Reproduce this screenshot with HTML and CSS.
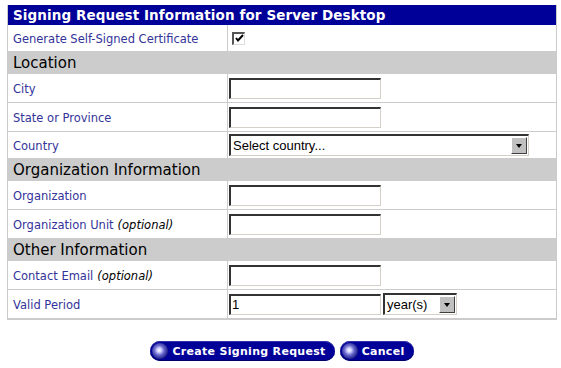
FILE: index.html
```html
<!DOCTYPE html>
<html lang="en">
<head>
  <meta charset="UTF-8">
  <title>Signing Request Information</title>
  <link rel="stylesheet" href="styles.css">
</head>
<body>
  <div class="panel">
    <div class="panel-title">Signing Request Information for Server Desktop</div>

    <div class="row row--check">
      <div class="label">Generate Self-Signed Certificate</div>
      <div class="field">
        <span class="check">
          <svg width="9" height="9" viewBox="0 0 9 9"><path d="M1 4 L3 6.5 L8 1" fill="none" stroke="#000" stroke-width="2"/></svg>
        </span>
      </div>
    </div>

    <div class="section">Location</div>
    <div class="row">
      <div class="label">City</div>
      <div class="field"><span class="text-input"></span></div>
    </div>
    <div class="row">
      <div class="label">State or Province</div>
      <div class="field"><span class="text-input"></span></div>
    </div>
    <div class="row row--select">
      <div class="label">Country</div>
      <div class="field">
        <div class="select select--wide">
          <span class="select-text">Select country...</span>
          <span class="select-arrow"></span>
        </div>
      </div>
    </div>

    <div class="section">Organization Information</div>
    <div class="row">
      <div class="label">Organization</div>
      <div class="field"><span class="text-input"></span></div>
    </div>
    <div class="row">
      <div class="label">Organization Unit <em>(optional)</em></div>
      <div class="field"><span class="text-input"></span></div>
    </div>

    <div class="section">Other Information</div>
    <div class="row">
      <div class="label">Contact Email <em>(optional)</em></div>
      <div class="field"><span class="text-input"></span></div>
    </div>
    <div class="row">
      <div class="label">Valid Period</div>
      <div class="field">
        <span class="text-input">1</span>
        <div class="select select--small">
          <span class="select-text">year(s)</span>
          <span class="select-arrow"></span>
        </div>
      </div>
    </div>
  </div>

  <div class="actions">
    <button class="btn"><span class="orb"></span>Create Signing Request</button>
    <button class="btn"><span class="orb"></span>Cancel</button>
  </div>
</body>
</html>
```

FILE: styles.css
```css
body {
  margin: 4px 0 0 7px;
  background: #fff;
  font-family: "DejaVu Sans", Verdana, sans-serif;
}

.panel {
  width: 550px;
  box-sizing: border-box;
  border: 1px solid #cccccc;
  border-top: none;
}

.panel-title {
  height: 20px;
  line-height: 20px;
  margin-top: 1px;
  padding-left: 5px;
  background: #000099;
  color: #fff;
  font-weight: bold;
  font-size: 13.5px;
  letter-spacing: 0.1px;
}

.row {
  display: grid;
  grid-template-columns: 220px 1fr;
  height: 28px;
  border-bottom: 1px solid #cccccc;
}

.row--check {
  height: 26px;
}

.row--select {
  height: 26px;
}

.label {
  display: flex;
  align-items: center;
  padding-left: 5px;
  padding-top: 1px;
  border-right: 1px solid #cccccc;
  color: #333399;
  font-size: 11.5px;
}

.label em {
  color: #000;
  margin-left: 4px;
  font-size: 11.5px;
}

.field {
  display: flex;
  align-items: center;
  gap: 2px;
  padding-left: 1px;
}

.section {
  height: 22px;
  line-height: 22px;
  padding-left: 5px;
  background: #cccccc;
  color: #000;
  font-size: 15px;
}

.check {
  display: flex;
  align-items: center;
  justify-content: center;
  width: 13px;
  height: 13px;
  box-sizing: border-box;
  margin-left: 3px;
  border-top: 2px solid #555;
  border-left: 2px solid #555;
  border-right: 1px solid #ddd;
  border-bottom: 1px solid #ddd;
  background: #fff;
}

.text-input {
  width: 152px;
  height: 21px;
  box-sizing: border-box;
  border-top: 2px solid #333;
  border-left: 2px solid #333;
  border-right: 1px solid #d4d0c8;
  border-bottom: 1px solid #d4d0c8;
  padding-left: 1px;
  font-family: "Liberation Sans", Arial, sans-serif;
  font-size: 13px;
  line-height: 18px;
  color: #000;
}

.select {
  display: flex;
  align-items: center;
  height: 22px;
  box-sizing: border-box;
  border-top: 2px solid #333;
  border-left: 2px solid #333;
  border-right: 1px solid #d4d0c8;
  border-bottom: 1px solid #d4d0c8;
  font-family: "Liberation Sans", Arial, sans-serif;
  font-size: 13px;
  color: #000;
  background: #fff;
}

.select--wide {
  width: 300px;
}

.select--small {
  width: 74px;
}

.select-text {
  flex: 1;
  padding-left: 2px;
}

.select-arrow {
  position: relative;
  width: 16px;
  height: 17px;
  box-sizing: border-box;
  margin-right: 1px;
  background: #c0c0c0;
  border-top: 1px solid #fff;
  border-left: 1px solid #fff;
  border-right: 1px solid #404040;
  border-bottom: 1px solid #404040;
}

.select-arrow::after {
  content: "";
  position: absolute;
  left: 4px;
  top: 6px;
  border-left: 3.5px solid transparent;
  border-right: 3.5px solid transparent;
  border-top: 4px solid #000;
}

.actions {
  display: flex;
  justify-content: center;
  gap: 5px;
  width: 550px;
  margin-top: 21px;
}

.btn {
  display: flex;
  align-items: center;
  height: 20px;
  margin: 0;
  padding: 0 9px 0 2px;
  border: none;
  border-radius: 10px;
  background: #000099;
  box-shadow: inset 0 -1px 0 #000066, inset 0 1px 0 #3333aa;
  color: #fff;
  font-family: "DejaVu Sans", Verdana, sans-serif;
  font-weight: bold;
  font-size: 11px;
  letter-spacing: 0.3px;
}

.orb {
  width: 16px;
  height: 16px;
  margin-right: 4px;
  border-radius: 50%;
  background: radial-gradient(circle at 45% 45%, #ffffff 0, #ccccff 18%, #6666cc 40%, #222288 70%, #000044 100%);
}
```
